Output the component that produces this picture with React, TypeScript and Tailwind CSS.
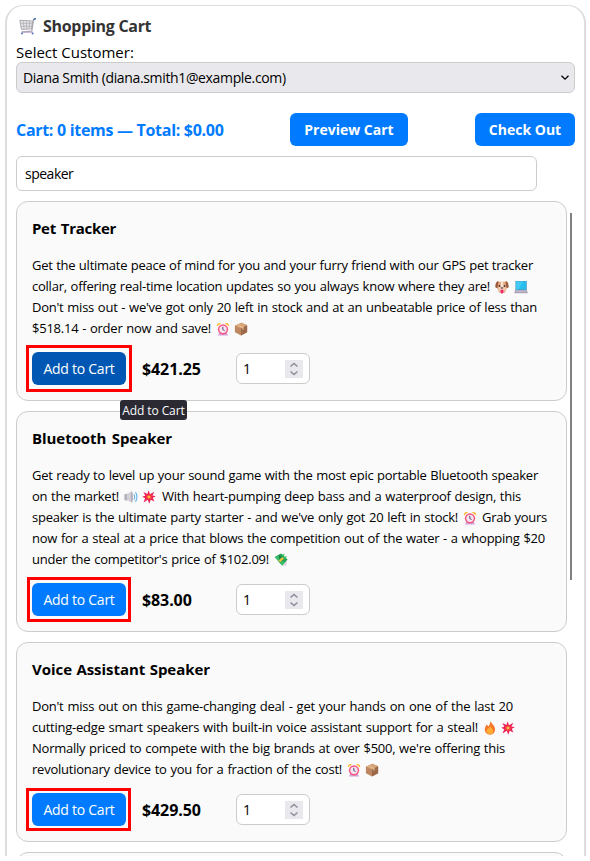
import React from "react";

type IconName = "cart" | "clock" | "box" | "dog" | "laptop" | "sound" | "boom" | "money" | "fire";

function Emoji({ name, className }: { name: IconName; className: string }) {
  return (
    <svg viewBox="0 0 16 16" className={`shrink-0 ${className}`}>
      {name === "cart" && (
        <g fill="none" strokeLinejoin="round" strokeLinecap="round">
          <path d="M.8 2.2 12.8 2.8 11.8 10.2 2.4 10.8Z" fill="#e4e4e8" stroke="#b0afb4" />
          <path d="M1.2 5h11.2M1.6 7.8h10.4M4 2.5l.8 8M7 2.6l.2 8M10 2.8l-.5 7.6" stroke="#b0afb4" strokeWidth=".7" />
          <path d="M15.4.8 13.8 1.2 12 12.4 3 13" stroke="#a5a3ac" strokeWidth="1.1" />
          <path d="M15.6.6 14 1.4" stroke="#4a76b4" strokeWidth="1.4" />
          <path d="M3 13.2h9.8" stroke="#b9a5c8" strokeWidth="1.2" />
          <circle cx="2.8" cy="14.6" r=".9" fill="#5873c2" />
          <circle cx="12.8" cy="14.6" r=".9" fill="#5873c2" />
        </g>
      )}
      {name === "clock" && (
        <g>
          <path d="M1 5.2C.4 2.4 2.6.4 5.8 1.4ZM15 5.2c.6-2.8-1.6-4.8-4.8-3.8Z" fill="#ffb92e" />
          <path d="M2 15.5 4 12h8l2 3.5Z" fill="#d3a5dd" />
          <circle cx="8" cy="8.4" r="5.9" fill="#f8557f" />
          <circle cx="8" cy="8.4" r="4.2" fill="#f5e5f2" />
          <path d="M7.8 5.5v3.2l2 1" fill="none" stroke="#5b416c" strokeWidth="1.1" />
        </g>
      )}
      {name === "box" && (
        <g>
          <path d="M1 4.2 8.6.8 15 3.8v7.8l-7 3.9-7-3.8Z" fill="#bd8861" />
          <path d="M1 4.2 8.6.8 15 3.8 8 7.5Z" fill="#d6a477" />
          <path d="M8 7.5 15 3.8v7.8l-7 3.9Z" fill="#9c6a48" />
          <path d="m4.4 2.8 6.6 3v2.6L9.7 9V6.8L3.2 3.4Z" fill="#e6be93" />
        </g>
      )}
      {name === "dog" && (
        <g>
          <path d="M3.5 2h9L14.2 8l-3 6.5H5L1.8 8Z" fill="#e8a77b" />
          <path d="M6.9 2h2.2l.9 6H6Z" fill="#fbe3cf" />
          <path d="M4 1.4C1.8 1 .2 4 .4 8.4c1.6 1.8 3 .2 3-2ZM12 1.4c2.2-.4 3.8 2.6 3.6 7-1.6 1.8-3 .2-3-2Z" fill="#9b5d42" />
          <ellipse cx="8" cy="10.3" rx="4.2" ry="3" fill="#efcdb4" />
          <circle cx="5.2" cy="6.8" r="1" fill="#3d2938" />
          <circle cx="10.8" cy="6.8" r="1" fill="#3d2938" />
          <path d="M6.3 8.6h3.4L8 10.4Z" fill="#3d2938" />
          <path d="M6.4 11.2h3.2v2.4c0 2.4-3.2 2.4-3.2 0Z" fill="#f5266d" />
        </g>
      )}
      {name === "laptop" && (
        <g>
          <path d="M1.6 1h13v10.5h-13Z" fill="#4d98c2" />
          <path d="M2.4 1.7h11.4v9H2.4Z" fill="#27bfee" />
          <path d="M2.4 1.7h8L5 10.7H2.4Z" fill="#45cbf3" />
          <path d="M1.4 11.4h13.2l1.2 3.7H.2Z" fill="#aaa3b9" />
          <path d="M2.5 12h11l.5 1.4H2Z" fill="#c3bccd" />
        </g>
      )}
      {name === "sound" && (
        <g>
          <path d="M.4 4.8 3.5 4.2v8l-3.1-.7Z" fill="#b5afba" />
          <path d="M3.4 4.4 9 1.3v13.4l-5.6-3Z" fill="#d4d0d8" />
          <ellipse cx="9" cy="8" rx="1.2" ry="6.6" fill="#b4aebb" />
          <path d="M11.5 5.4q1.4 2.6 0 5.2M13.4 3q2.8 5 0 10" fill="none" stroke="#5aaee9" strokeWidth="1.2" strokeLinecap="round" />
        </g>
      )}
      {name === "boom" && (
        <g>
          <path d="m7.6.4 1.5 4.4 5-2.9-2.2 4.5 3.9.8-3.5 1.7 1.8 4.3-4.2-2L8.4 15.6l-1.9-4.4-4.7 3 1.8-4.8L.2 7.8l3.6-1.2L1.6 2.2l4.6 2.3Z" fill="#ed1f56" />
          <path d="m8 4.4.8 2.2 2.4-.6-1 2 1.2 2.1-2.4-.6L7.7 11.6l-.9-2.3-2.2.5 1.2-1.8-1.2-1.8 2.3.4Z" fill="#f9702f" />
          <circle cx="8" cy="8" r="1.2" fill="#ffc94d" />
        </g>
      )}
      {name === "money" && (
        <g>
          <path d="M9.4 11 15 8.8l-1 5.8-4.6-.4Z" fill="#d9d7df" />
          <path d="M1 4.6 8 .5l7.5 6.8-6.3 7Z" fill="#20a052" />
          <path d="M1 4.6 4.2 2.8l8.3 8-3.3 3.5Z" fill="#37be68" />
          <path d="m5.5 2 6 5.8-5 3.4Z" fill="#158044" />
          <path d="m9 2 3.3-1.2L11 4.2l4-.4-2.6 3.5Z" fill="#3bbd68" />
          <path d="m5.2 8.5 4.2-4 2 2-4.3 4.1Z" fill="#f1bf42" />
        </g>
      )}
      {name === "fire" && (
        <g>
          <path d="M8 .4c2.2 2.4 4.6 4.6 5.6 7.6 1 3.8-1.4 7.6-5.6 7.6s-6.6-3.6-5.8-7.2C2.6 6.6 3.6 5.6 4 4c1.2.6 1.7 1.5 1.8 2.4C7.6 4.8 8.5 3 8 .4Z" fill="#f5772b" />
          <path d="M8.4 5.8c.4 2.4 3.6 3.2 3.3 6.2-.2 2-1.8 3-3.7 3-2.6 0-4.4-1.8-3.9-4.2C4.7 8.2 7.8 8.4 8.4 5.8Z" fill="#ffac35" />
        </g>
      )}
    </svg>
  );
}

type Segment = { text?: string; icon?: IconName; cls: string };
type Product = { name: string; titleCls: string; price: string; priceCls: string; hovered?: boolean; outline: string; lines: Segment[][] };

const products: Product[] = [
  {
    name: "Pet Tracker",
    titleCls: "w-[84px] tracking-[-0.3px]",
    price: "$421.25",
    priceCls: "w-[60px]",
    hovered: true,
    outline: "-top-[7px] -left-[6px] h-[47px] w-[106px]",
    lines: [
      [{ text: "Get the ultimate peace of mind for you and your furry friend with our GPS pet tracker", cls: "w-[501px]" }],
      [
        { text: "collar, offering real-time location updates so you always know where they are!", cls: "w-[458px]" },
        { icon: "dog", cls: "ml-[5px]" },
        { icon: "laptop", cls: "ml-[5px]" },
      ],
      [{ text: "Don't miss out - we've got only 20 left in stock and at an unbeatable price of less than", cls: "w-[505px]" }],
      [
        { text: "$518.14 - order now and save!", cls: "w-[179px]" },
        { icon: "clock", cls: "ml-[5px]" },
        { icon: "box", cls: "ml-[4px]" },
      ],
    ],
  },
  {
    name: "Bluetooth Speaker",
    titleCls: "w-[140px] tracking-[-0.05px]",
    price: "$83.00",
    priceCls: "w-[51px]",
    outline: "-top-[6px] -left-[5px] h-[45px] w-[104px]",
    lines: [
      [{ text: "Get ready to level up your sound game with the most epic portable Bluetooth speaker", cls: "w-[506px]" }],
      [
        { text: "on the market!", cls: "w-[87px]" },
        { icon: "sound", cls: "ml-[5px]" },
        { icon: "boom", cls: "ml-[4px]" },
        { text: "With heart-pumping deep bass and a waterproof design, this", cls: "ml-[6px] w-[359px]" },
      ],
      [
        { text: "speaker is the ultimate party starter - and we've only got 20 left in stock!", cls: "w-[426px]" },
        { icon: "clock", cls: "ml-[5px]" },
        { text: "Grab yours", cls: "ml-[5px] w-[65px]" },
      ],
      [{ text: "now for a steal at a price that blows the competition out of the water - a whopping $20", cls: "w-[513px]" }],
      [
        { text: "under the competitor's price of $102.09!", cls: "w-[237px]" },
        { icon: "money", cls: "ml-[5px]" },
      ],
    ],
  },
  {
    name: "Voice Assistant Speaker",
    titleCls: "w-[178px] tracking-[-0.05px]",
    price: "$429.50",
    priceCls: "w-[60px]",
    outline: "-top-[5px] -left-[6px] h-[43px] w-[105px]",
    lines: [
      [{ text: "Don't miss out on this game-changing deal - get your hands on one of the last 20", cls: "w-[481px]" }],
      [
        { text: "cutting-edge smart speakers with built-in voice assistant support for a steal!", cls: "w-[446px]" },
        { icon: "fire", cls: "ml-[5px]" },
        { icon: "boom", cls: "ml-[4px]" },
      ],
      [{ text: "Normally priced to compete with the big brands at over $500, we're offering this", cls: "w-[473px]" }],
      [
        { text: "revolutionary device to you for a fraction of the cost!", cls: "w-[310px]" },
        { icon: "clock", cls: "ml-[5px]" },
        { icon: "box", cls: "ml-[4px]" },
      ],
    ],
  },
];

function Quantity() {
  return (
    <div className="ml-auto flex h-[31px] w-[74px] items-center justify-between rounded-[6px] border border-[#ccc] bg-white pr-1.5 pl-1.5 text-[14px]">
      <span>1</span>
      <svg viewBox="0 0 18 18" className="h-[18px] w-[18px] bg-[#e9e9ed]">
        <path d="m5.5 6.5 3.5-3 3.5 3M5.5 11.5l3.5 3 3.5-3" fill="none" stroke="#8f8f9d" strokeWidth="1.6" />
      </svg>
    </div>
  );
}

function ProductCard({ product }: { product: Product }) {
  return (
    <article className="rounded-xl border border-[#ccc] bg-[#fafafa] px-[15px] pt-4 pb-[15px]">
      <h2 className={`h-[21px] text-[15px] leading-[21px] font-bold whitespace-nowrap [text-align-last:justify] ${product.titleCls}`}>
        {product.name}
      </h2>
      <div className="mt-4 text-[13px] leading-[21px] tracking-[-0.24px]">
        {product.lines.map((line, i) => (
          <div key={i} className="flex h-[21px] items-center whitespace-nowrap">
            {line.map((seg, j) =>
              seg.icon ? (
                <Emoji key={j} name={seg.icon} className={`h-3.5 w-3.5 ${seg.cls}`} />
              ) : (
                <span key={j} className={`shrink-0 [text-align-last:justify] ${seg.cls}`}>
                  {seg.text}
                </span>
              )
            )}
          </div>
        ))}
      </div>
      <div className="mt-[13px] flex h-[33px] w-[278px] items-center">
        <div className="relative">
          <button
            className={`h-[33px] w-[94px] rounded-[6px] text-[14px] tracking-[-0.25px] whitespace-nowrap text-white ${product.hovered ? "bg-[#0056b3]" : "bg-[#007bff]"}`}
          >
            Add to Cart
          </button>
          <div className={`absolute border-[3px] border-[#f00] ${product.outline}`} />
          {product.hovered && (
            <div className="absolute top-12 left-[88px] z-10 h-5 w-[67px] rounded-[3px] bg-[#2b2a33] text-center text-[12px] leading-[21px] tracking-[-0.1px] whitespace-nowrap text-[#fbfbfe]">
              Add to Cart
            </div>
          )}
        </div>
        <strong className={`ml-4 pt-px text-[16px] tracking-[-0.1px] ${product.priceCls}`}>{product.price}</strong>
        <Quantity />
      </div>
    </article>
  );
}

export default function App() {
  return (
    <div className="h-[861px] w-[590px] overflow-hidden bg-white pt-[5px] pl-[5px] font-['Open_Sans','Noto_Sans',sans-serif] text-black">
      <main className="relative flex h-[851px] w-[581px] flex-col overflow-hidden rounded-t-[18px] border-x-2 border-t border-[#ddd] pr-[9px] pl-[9px]">
        <h1 className="mt-2 flex h-[24px] shrink-0 items-center text-[16px] font-bold tracking-[-0.3px] text-[#333]">
          <Emoji name="cart" className="mr-[7px] ml-[3px] h-[17px] w-[17px]" />
          Shopping Cart
        </h1>
        <label className="mt-1 block h-5 shrink-0 text-[15px] leading-[20px]">Select Customer:</label>
        <div className="flex h-[31px] shrink-0 items-center justify-between rounded-[6px] border border-[#ccc] bg-[#e9e9ed] pr-[5px] pl-1.5 text-[14px] tracking-[-0.35px]">
          Diana Smith (diana.smith1@example.com)
          <svg viewBox="0 0 8 6" className="h-1.5 w-2">
            <path d="m.5.7 3.5 3.5L7.5.7" fill="none" stroke="#000" strokeWidth="1.3" />
          </svg>
        </div>
        <div className="mt-5 flex h-[33px] shrink-0 items-center font-bold">
          <span className="w-[274px] pt-px text-[16px] tracking-[-0.3px] whitespace-nowrap text-[#007bff]">Cart: 0 items — Total: $0.00</span>
          <button className="h-[33px] w-[118px] rounded-[6px] bg-[#007bff] text-[14px] text-white">Preview Cart</button>
          <button className="ml-auto h-[33px] w-[100px] rounded-[6px] bg-[#007bff] text-[14px] text-white">Check Out</button>
        </div>
        <div className="mt-2.5 h-[35px] w-[521px] shrink-0 rounded-[6px] border border-[#ccc] bg-white pl-2 text-[14px] leading-[33px] tracking-[-0.5px]">
          speaker
        </div>
        <section className="mt-2.5 flex w-[551px] flex-col gap-2.5">
          {products.map((product) => (
            <ProductCard key={product.name} product={product} />
          ))}
          <div className="h-10 shrink-0 rounded-xl border border-[#ccc] bg-[#fafafa]" />
        </section>
        <div className="absolute top-[207px] left-[563px] h-[367px] w-0.5 bg-[#808080]" />
      </main>
    </div>
  );
}
